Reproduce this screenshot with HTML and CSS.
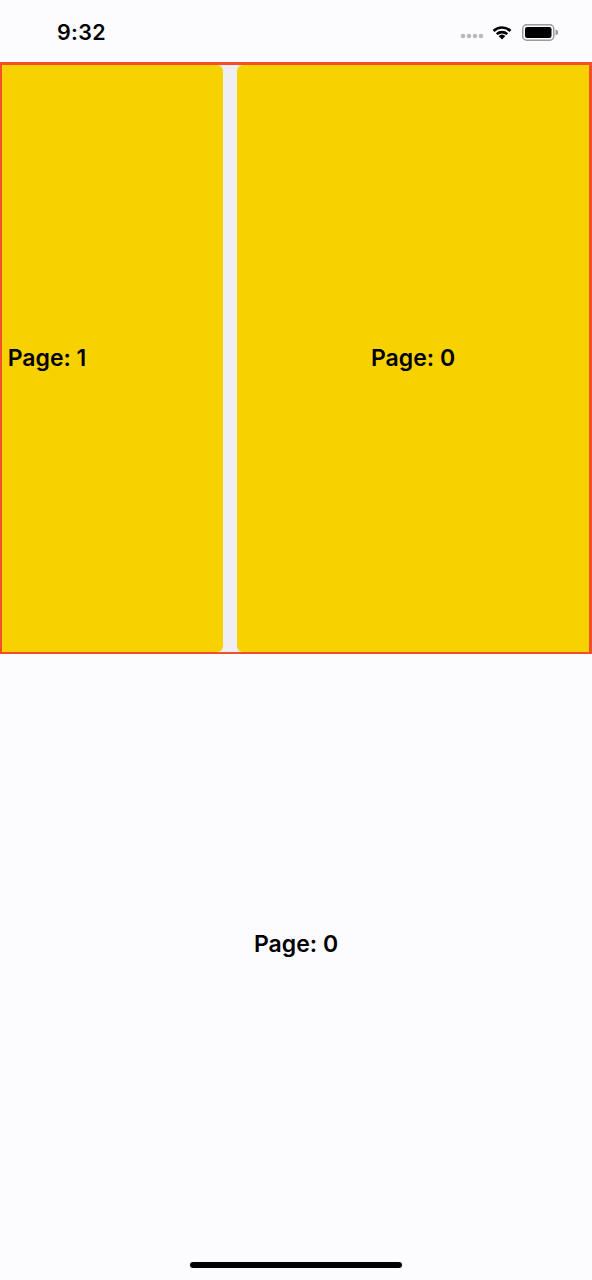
FILE: index.html
```html
<!DOCTYPE html>
<html>
<head>
<meta charset="utf-8">
<link rel="stylesheet" href="styles.css">
</head>
<body>
<div class="screen">
  <header class="status">
    <span class="time">9:32</span>
    <div class="status-icons">
      <svg class="signal" width="24" height="6" viewBox="0 0 24 6">
        <circle cx="3" cy="3" r="2.3" fill="#b9b9bd"/>
        <circle cx="9" cy="3" r="2.3" fill="#b9b9bd"/>
        <circle cx="15" cy="3" r="2.3" fill="#b9b9bd"/>
        <circle cx="21" cy="3" r="2.3" fill="#b9b9bd"/>
      </svg>
      <svg class="wifi" width="22" height="16" viewBox="0 0 22 16">
        <path d="M11 15.5 L7.6 12 A5 5 0 0 1 14.4 12 Z" fill="#000"/>
        <path d="M4.8 9.2 A9 9 0 0 1 17.2 9.2 L15.3 11.1 A6.3 6.3 0 0 0 6.7 11.1 Z" fill="#000"/>
        <path d="M1.6 6 A13.5 13.5 0 0 1 20.4 6 L18.5 7.9 A10.8 10.8 0 0 0 3.5 7.9 Z" fill="#000"/>
      </svg>
      <svg class="battery" width="36" height="17" viewBox="0 0 36 17">
        <rect x="0.75" y="0.75" width="31" height="15.5" rx="4" fill="none" stroke="#9a9a9f" stroke-width="1.5"/>
        <rect x="3" y="3" width="26.5" height="11" rx="2.2" fill="#000"/>
        <path d="M33.5 5.8 A2.6 2.6 0 0 1 33.5 11.2 Z" fill="#9a9a9f"/>
      </svg>
    </div>
  </header>

  <section class="pager">
    <div class="page page-left">
      <div class="page-inner">
        <span class="label">Page: 1</span>
      </div>
    </div>
    <div class="divider"></div>
    <div class="page page-right">
      <span class="label">Page: 0</span>
    </div>
  </section>

  <main class="content">
    <span class="label">Page: 0</span>
  </main>

  <div class="home-bar"><span class="home-indicator"></span></div>
</div>
</body>
</html>
```

FILE: styles.css
```css
html, body {
  margin: 0;
  padding: 0;
  background: #fcfcfe;
}

.screen {
  width: 592px;
  height: 1280px;
  display: flex;
  flex-direction: column;
  background: #fcfcfe;
  font-family: Inter, "Noto Sans", "Liberation Sans", sans-serif;
  color: #000;
  overflow: hidden;
}

.status {
  height: 62px;
  flex: none;
  display: flex;
  align-items: center;
  justify-content: space-between;
  box-sizing: border-box;
  padding: 2px 34px 0 57px;
}

.time {
  font-size: 21.5px;
  font-weight: 600;
  letter-spacing: 0.3px;
}

.status-icons {
  display: flex;
  align-items: center;
  gap: 0;
}

.signal { margin-top: 8px; margin-right: 7px; }
.wifi { margin-right: 9px; margin-top: 0px; }

.pager {
  height: 592px;
  flex: none;
  box-sizing: border-box;
  border: 3px solid #f24f2c;
  border-left-width: 2px;
  border-bottom-width: 2px;
  display: flex;
  background: #eeeef3;
}

.page {
  background: #f8d200;
  display: flex;
  align-items: center;
  justify-content: center;
  overflow: hidden;
}

.page-left {
  width: 221px;
  flex: none;
  justify-content: flex-end;
  border-radius: 0 6px 6px 0;
}

.page-inner {
  width: 352px;
  flex: none;
  display: flex;
  justify-content: center;
}

.divider {
  width: 14px;
  flex: none;
  background: #eeeef3;
}

.page-right {
  flex: 1;
  border-radius: 6px 0 0 6px;
}

.label {
  font-size: 23px;
  font-weight: 600;
  line-height: 1;
}

.content {
  height: 580px;
  flex: none;
  display: flex;
  align-items: center;
  justify-content: center;
}

.home-bar {
  flex: 1;
  display: flex;
  justify-content: center;
  align-items: flex-start;
  padding-top: 28px;
}

.home-indicator {
  width: 212px;
  height: 6px;
  border-radius: 3px;
  background: #000;
}
```
